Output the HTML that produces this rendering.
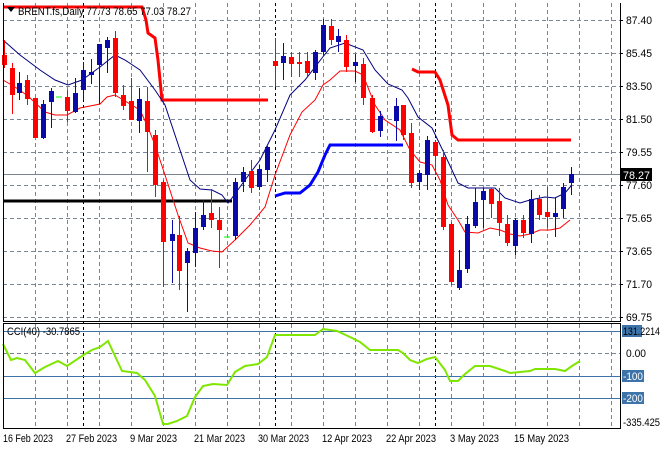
<!DOCTYPE html>
<html><head><meta charset="utf-8"><style>
html,body{margin:0;padding:0;background:#fff;}
svg{display:block;font-family:"Liberation Sans",sans-serif;font-size:11px;}
</style></head><body>
<svg width="660" height="450" viewBox="0 0 660 450" xmlns="http://www.w3.org/2000/svg">
<rect width="660" height="450" fill="#fff"/>
<g stroke="#7a8594" stroke-width="1" stroke-dasharray="4,3" fill="none">
<path d="M3 20.5H620M3 53.5H620M3 86.5H620M3 119.5H620M3 152.5H620M3 185.5H620M3 218.5H620M3 251.5H620M3 284.5H620M3 317.5H620"/>
<path d="M35.5 3V321M67.5 3V321M99.5 3V321M131.5 3V321M163.5 3V321M195.5 3V321M227.5 3V321M259.5 3V321M291.5 3V321M323.5 3V321M355.5 3V321M387.5 3V321M419.5 3V321M451.5 3V321M483.5 3V321M515.5 3V321M547.5 3V321M579.5 3V321M611.5 3V321"/>
<path d="M35.5 324V429M67.5 324V429M99.5 324V429M131.5 324V429M163.5 324V429M195.5 324V429M227.5 324V429M259.5 324V429M291.5 324V429M323.5 324V429M355.5 324V429M387.5 324V429M419.5 324V429M451.5 324V429M483.5 324V429M515.5 324V429M547.5 324V429M579.5 324V429M611.5 324V429"/>
<path d="M3 353.5H620"/>
</g>
<g stroke="#000" stroke-width="1" stroke-dasharray="3,3" fill="none">
<path d="M83.5 3V429M275.5 3V429M435.5 3V429"/>
</g>
<g stroke="#3d73a8" stroke-width="1"><path d="M3 331.5H620M3 376.5H620M3 398.5H620"/></g>
<path d="M3 174.5H620" stroke="#7a8594"/>
<path d="M3 201H232" stroke="#000" stroke-width="3"/>
<polyline fill="none" stroke="#f00" stroke-width="3" points="3,7 142,7 146,20 148,33 155,38 158,60 162,100 268,100"/>
<polyline fill="none" stroke="#f00" stroke-width="3" points="412,69 418,72 435,72 440,80 448,105 452,135 458,140 571,140"/>
<polyline fill="none" stroke="#0000ff" stroke-width="3" points="275,196 285,193 300,193 310,185 318,172 325,155 330,145 403,145"/>
<polyline fill="none" stroke="#00007f" stroke-width="1" points="3,40 20,55 40,70 55,80 68,85 82,80 100,67 115,55 125,60 140,70 155,90 165,105 180,150 190,180 200,189 212,190 222,195 228,203 232,198 245,180 260,160 275,130 290,95 305,80 322,58 330,48 345,43 363,50 375,70 388,84 402,90 408,98 418,117 432,128 445,155 458,183 468,188 485,188 495,188 505,198 520,203 530,200 545,197 555,198 565,193 571,186"/>
<polyline fill="none" stroke="#f00" stroke-width="1" points="3,80 15,87 28,96 45,112 55,115 67,115 80,108 100,104 107,97 115,95 125,101 140,110 147,125 155,145 165,175 178,215 188,243 200,248 212,251 222,252 235,240 250,225 265,207 275,175 290,135 302,112 315,100 323,85 330,80 340,71 355,71 363,75 375,105 385,120 400,130 410,150 420,162 432,165 440,180 448,205 458,220 465,232 478,233 490,228 500,230 510,234 520,236 530,234 540,230 550,230 560,228 570,220"/>
<!-- red wicks -->
<path fill="none" stroke="#f00" d="M4.5 40V68M12.5 63V114M27.5 75V105M35.5 98V138M67.5 90V122M115.5 31V97M123.5 85V110M131.5 78V120M147.5 87V172M155.5 130V197M163.5 180V287M179.5 216V290M211.5 189V228M219.5 207V268M251.5 160V193M275.5 38V87M291.5 52V77M299.5 52V77M307.5 52V76M331.5 19V45M346.5 35V72M363.5 58V105M372.5 95V133M403.5 105V140M411.5 123V188M435.5 140V175M443.5 150V230M451.5 222V285M491.5 188V218M499.5 188V236M507.5 215V246M523.5 215V238M539.5 195V220M547.5 187V228"/>
<path fill="none" stroke="#0a0aa8" d="M19.5 72V100M43.5 100V139M51.5 88V128M75.5 78V113M83.5 62V100M91.5 59V84M99.5 44V104M107.5 37V73M139.5 88V133M172.5 220V283M187.5 248V312M195.5 212V267M203.5 200V230M235.5 178V240M243.5 167V192M259.5 165V190M267.5 146V182M283.5 43V80M315.5 50V80M323.5 19V55M338.5 29V52M355.5 54V82M380.5 111V137M396.5 98V141M419.5 170V190M427.5 136V190M459.5 250V290M467.5 216V273M475.5 188V228M483.5 188V228M515.5 218V255M531.5 190V243M555.5 197V237M563.5 183V218M571.5 167V195"/>
<g fill="#f00">
<rect x="2" y="55" width="5" height="10"/><rect x="10" y="68" width="5" height="27"/><rect x="25" y="80" width="5" height="19"/><rect x="33" y="98" width="5" height="40"/><rect x="65" y="97" width="5" height="14"/><rect x="113" y="38" width="5" height="55"/><rect x="121" y="95" width="5" height="11"/><rect x="129" y="101" width="5" height="19"/><rect x="145" y="101" width="5" height="31"/><rect x="153" y="135" width="5" height="50"/><rect x="161" y="182" width="5" height="60"/><rect x="177" y="235" width="5" height="36"/><rect x="209" y="213" width="5" height="7"/><rect x="217" y="220" width="5" height="10"/><rect x="249" y="171" width="5" height="17"/><rect x="273" y="61" width="5" height="5"/><rect x="289" y="57" width="5" height="7"/><rect x="297" y="62" width="5" height="2"/><rect x="305" y="61" width="5" height="12"/><rect x="329" y="26" width="5" height="14"/><rect x="344" y="40" width="5" height="27"/><rect x="361" y="64" width="5" height="34"/><rect x="370" y="98" width="5" height="34"/><rect x="401" y="105" width="5" height="30"/><rect x="409" y="133" width="5" height="50"/><rect x="433" y="142" width="5" height="14"/><rect x="441" y="157" width="5" height="70"/><rect x="449" y="224" width="5" height="58"/><rect x="489" y="189" width="5" height="15"/><rect x="497" y="201" width="5" height="22"/><rect x="505" y="224" width="5" height="19"/><rect x="521" y="220" width="5" height="13"/><rect x="537" y="199" width="5" height="16"/><rect x="545" y="212" width="5" height="5"/>
</g>
<g fill="#0a0aa8">
<rect x="17" y="83" width="5" height="10"/><rect x="41" y="104" width="5" height="34"/><rect x="49" y="91" width="5" height="11"/><rect x="73" y="93" width="5" height="19"/><rect x="81" y="70" width="5" height="20"/><rect x="89" y="72" width="5" height="3"/><rect x="97" y="44" width="5" height="21"/><rect x="105" y="40" width="5" height="8"/><rect x="137" y="99" width="5" height="22"/><rect x="170" y="234" width="5" height="7"/><rect x="185" y="251" width="5" height="12"/><rect x="193" y="228" width="5" height="25"/><rect x="201" y="215" width="5" height="12"/><rect x="233" y="182" width="5" height="54"/><rect x="241" y="172" width="5" height="10"/><rect x="257" y="169" width="5" height="18"/><rect x="265" y="147" width="5" height="23"/><rect x="281" y="56" width="5" height="7"/><rect x="313" y="52" width="5" height="21"/><rect x="321" y="25" width="5" height="27"/><rect x="336" y="36" width="5" height="6"/><rect x="353" y="62" width="5" height="4"/><rect x="378" y="116" width="5" height="15"/><rect x="394" y="106" width="5" height="15"/><rect x="417" y="173" width="5" height="9"/><rect x="425" y="140" width="5" height="35"/><rect x="457" y="270" width="5" height="18"/><rect x="465" y="224" width="5" height="45"/><rect x="473" y="202" width="5" height="24"/><rect x="481" y="191" width="5" height="9"/><rect x="513" y="220" width="5" height="26"/><rect x="529" y="199" width="5" height="35"/><rect x="553" y="213" width="5" height="4"/><rect x="561" y="187" width="5" height="22"/><rect x="569" y="174" width="5" height="9"/>
</g>
<path d="M56 97H62M224 237H230" stroke="#00ff00"/>
<polyline fill="none" stroke="#7fe600" stroke-width="2" points="3,344 11,360 17,358 25,360 35,373 45,367 58,361 67,366 85,354 92,350 100,347 108,341 122,371 137,373 145,380 155,396 163,424 168,424 177,421 187,416 195,397 203,386 213,384 227,385 235,372 245,366 258,364 267,357 275,335 315,335 323,329 337,331 350,337 360,342 370,350 398,350 403,353 410,360 418,363 427,359 435,357 445,370 450,381 458,381 465,374 475,366 490,366 505,371 510,373 520,372 530,371 535,369 555,369 565,371 572,366 580,361"/>
<g stroke="#000" fill="none" stroke-width="1">
<path d="M3.5 3V321.5H620.5V3"/>
<rect x="3.5" y="323.5" width="617" height="105"/>
</g>
<g fill="#000" lengthAdjust="spacingAndGlyphs">
<text x="626" y="24" textLength="26" lengthAdjust="spacingAndGlyphs">87.40</text><text x="626" y="57" textLength="26" lengthAdjust="spacingAndGlyphs">85.45</text><text x="626" y="90" textLength="26" lengthAdjust="spacingAndGlyphs">83.50</text><text x="626" y="123" textLength="26" lengthAdjust="spacingAndGlyphs">81.50</text><text x="626" y="156" textLength="26" lengthAdjust="spacingAndGlyphs">79.55</text><text x="626" y="189" textLength="26" lengthAdjust="spacingAndGlyphs">77.60</text><text x="626" y="222" textLength="26" lengthAdjust="spacingAndGlyphs">75.65</text><text x="626" y="255" textLength="26" lengthAdjust="spacingAndGlyphs">73.65</text><text x="626" y="288" textLength="26" lengthAdjust="spacingAndGlyphs">71.70</text><text x="626" y="321" textLength="26" lengthAdjust="spacingAndGlyphs">69.75</text>
<text x="626" y="357" textLength="20" lengthAdjust="spacingAndGlyphs">0.00</text><text x="623" y="426" textLength="37" lengthAdjust="spacingAndGlyphs">-335.425</text>
</g>
<rect x="621" y="168" width="31" height="13" fill="#000"/><text x="623" y="179" fill="#fff" textLength="27" lengthAdjust="spacingAndGlyphs">78.27</text>
<rect x="622" y="325" width="20" height="12" fill="#3d73a8"/><text x="623" y="335" fill="#000" textLength="37" lengthAdjust="spacingAndGlyphs">131.2214</text>
<rect x="622" y="370" width="22" height="12" fill="#3d73a8"/><text x="623" y="380" fill="#fff" textLength="20" lengthAdjust="spacingAndGlyphs">-100</text>
<rect x="622" y="392" width="22" height="12" fill="#3d73a8"/><text x="623" y="402" fill="#fff" textLength="20" lengthAdjust="spacingAndGlyphs">-200</text>
<g stroke="#000"><path d="M620 20.5h3M620 53.5h3M620 86.5h3M620 119.5h3M620 152.5h3M620 185.5h3M620 218.5h3M620 251.5h3M620 284.5h3M620 317.5h3"/></g>
<g fill="#000">
<text x="3" y="442" textLength="50" lengthAdjust="spacingAndGlyphs">16 Feb 2023</text><text x="66" y="442" textLength="51" lengthAdjust="spacingAndGlyphs">27 Feb 2023</text><text x="130" y="442" textLength="47" lengthAdjust="spacingAndGlyphs">9 Mar 2023</text><text x="194" y="442" textLength="51" lengthAdjust="spacingAndGlyphs">21 Mar 2023</text><text x="258" y="442" textLength="51" lengthAdjust="spacingAndGlyphs">30 Mar 2023</text><text x="322" y="442" textLength="50" lengthAdjust="spacingAndGlyphs">12 Apr 2023</text><text x="386" y="442" textLength="50" lengthAdjust="spacingAndGlyphs">22 Apr 2023</text><text x="450" y="442" textLength="49" lengthAdjust="spacingAndGlyphs">3 May 2023</text><text x="514" y="442" textLength="55" lengthAdjust="spacingAndGlyphs">15 May 2023</text>
</g>
<path d="M7 7h8l-4 5z" fill="#000"/>
<text x="18" y="15" fill="#000" textLength="173" lengthAdjust="spacingAndGlyphs">BRENT.fs,Daily  77.73 78.65 77.03 78.27</text>
<text x="7" y="335" fill="#000" textLength="73" lengthAdjust="spacingAndGlyphs">CCI(40) -30.7865</text>
</svg>
</body></html>
